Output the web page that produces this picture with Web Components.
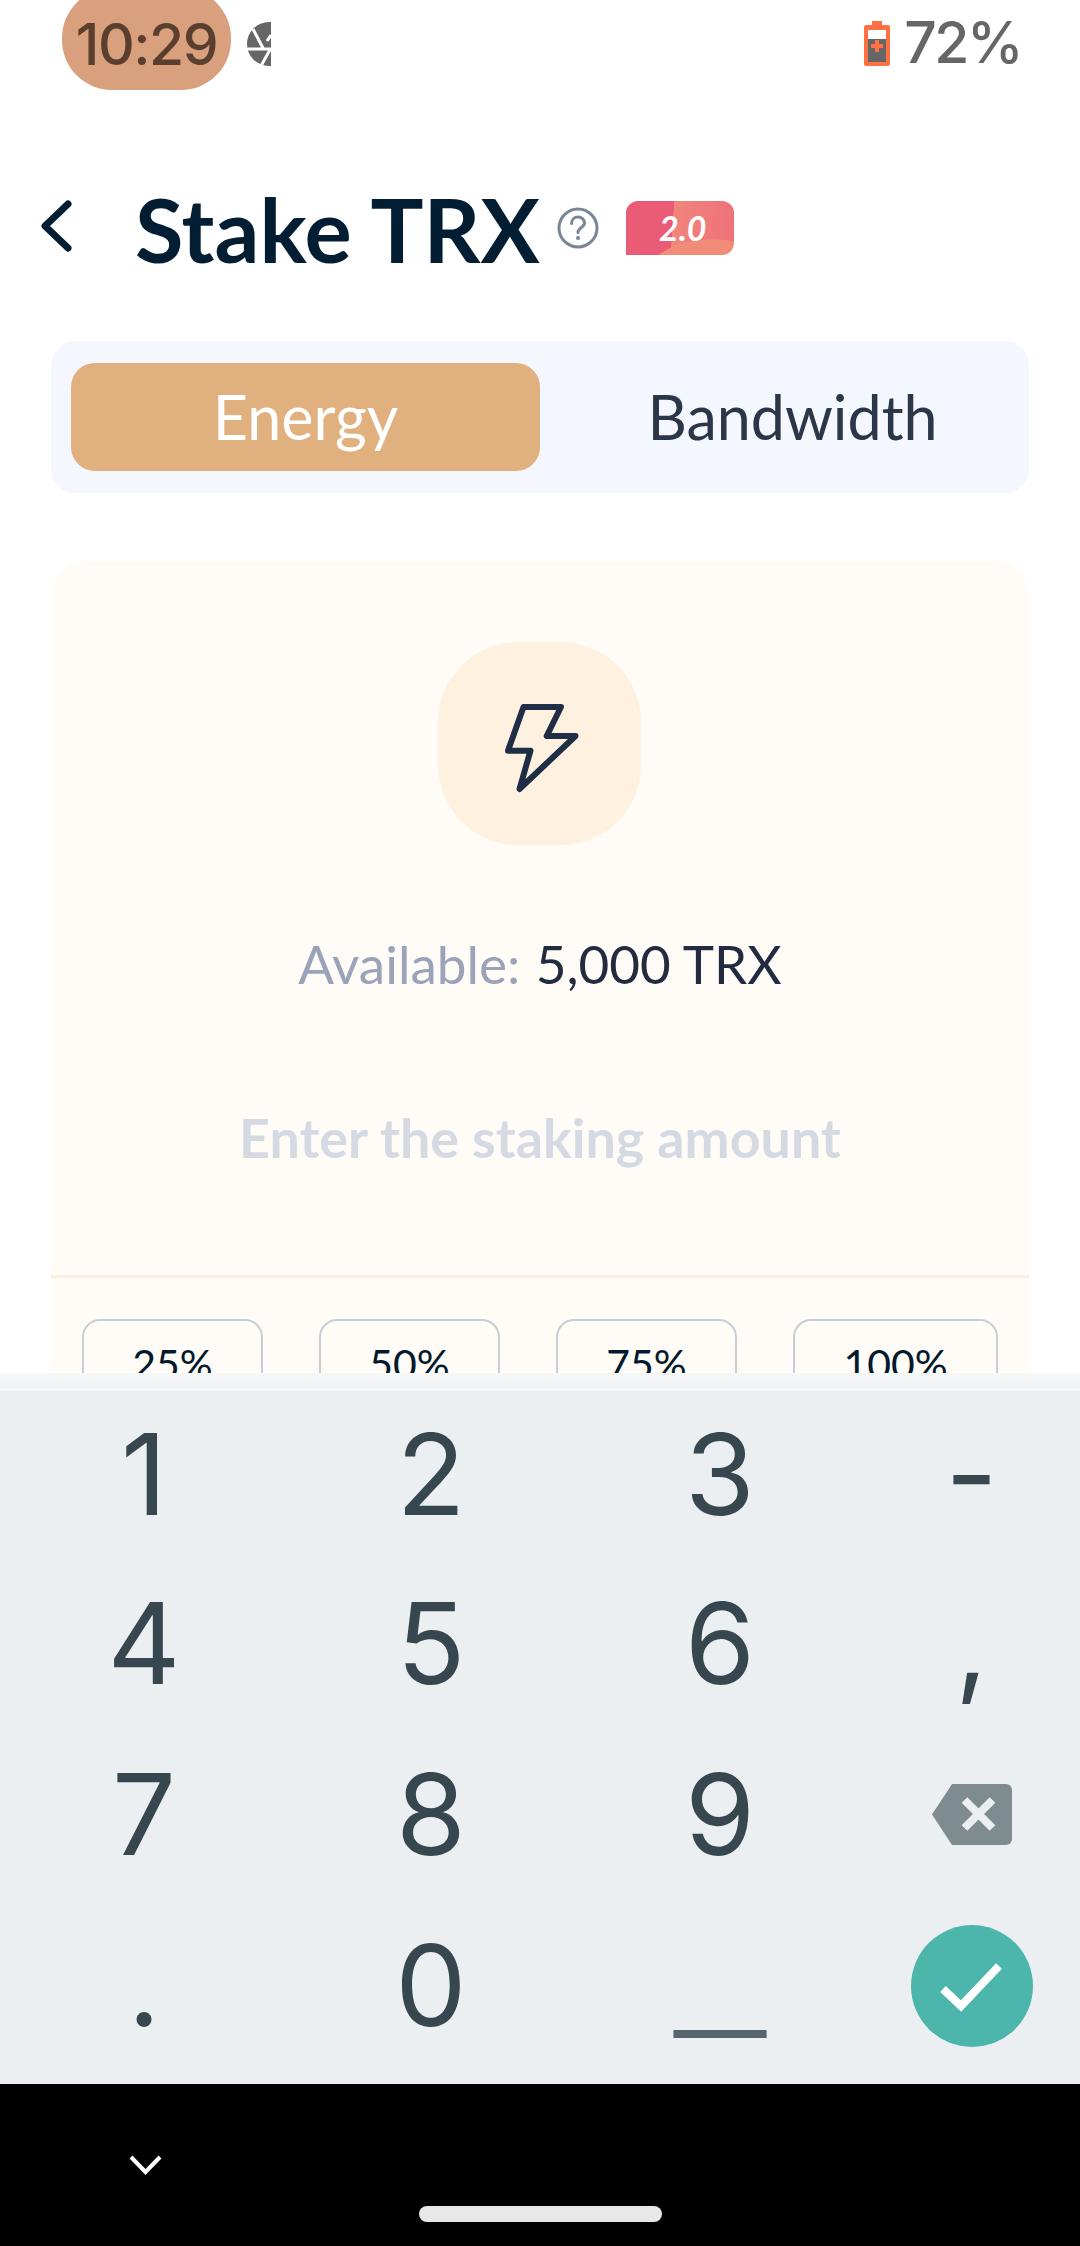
<!DOCTYPE html>
<html lang="en">
<head>
<meta charset="utf-8">
<title>Stake TRX</title>
<style>
  html, body { margin: 0; padding: 0; background: #fff; }
  body { width: 1080px; height: 2246px; overflow: hidden; display: flex; flex-direction: column; font-family: Lato, "Open Sans", sans-serif; }
  stake-view { flex: 1; min-height: 0; }
</style>
</head>
<body>
<status-bar time="10:29" level="72%"></status-bar>
<stake-view>
  <page-header title="Stake TRX"></page-header>
  <resource-tabs active="Energy" other="Bandwidth"></resource-tabs>
  <stake-card available="5,000 TRX" placeholder="Enter the staking amount">
    <percent-button>25%</percent-button>
    <percent-button>50%</percent-button>
    <percent-button>75%</percent-button>
    <percent-button wide>100%</percent-button>
  </stake-card>
</stake-view>
<number-keyboard></number-keyboard>
<nav-strip></nav-strip>

<script>
class StatusBar extends HTMLElement {
  connectedCallback() {
    const root = this.attachShadow({ mode: "open" });
    root.innerHTML = `
      <style>
        :host { display: flex; align-items: flex-start; height: 90px; flex: none; overflow: hidden; font-family: Inter, sans-serif; font-weight: 500; color: #666; }
        .pill { margin: -12px 0 0 62px; width: 169px; height: 102px; border-radius: 50px; background: #d9a07e; color: #5b3f2e; display: flex; align-items: center; justify-content: center; font-size: 57px; padding-top: 10px; box-sizing: border-box; letter-spacing: -1.500px; }
        .shutter { margin: 22px 0 0 16px; }
        .right { margin-left: auto; display: flex; align-items: flex-start; padding: 10px 59px 0 0; }
        .pct { font-size: 57px; line-height: 66px; margin-left: 14px; letter-spacing: -2.500px; }
        .batt { margin-top: 11px; }
      </style>
      <div class="pill">${this.getAttribute("time")}</div>
      <svg class="shutter" width="24" height="44" viewBox="0 0 24 44">
        <circle cx="22" cy="22" r="22" fill="#666"/>
        <path d="M6 7 L17 28 M-2 27 H24 M14 44 L24 26 M24 13 L20 19" stroke="#fff" stroke-width="3" fill="none"/>
      </svg>
      <div class="right">
        <svg class="batt" width="26" height="45" viewBox="0 0 26 45">
          <path d="M8 0h10v4h6a2 2 0 0 1 2 2v37a2 2 0 0 1-2 2H2a2 2 0 0 1-2-2V6a2 2 0 0 1 2-2h6z" fill="#ff7043"/>
          <rect x="4" y="9" width="18" height="9" fill="#fff"/>
          <rect x="4" y="18" width="18" height="23" fill="#666"/>
          <path d="M13 19v12M7 25h12" stroke="#ff7043" stroke-width="4"/>
        </svg>
        <span class="pct">${this.getAttribute("level")}</span>
      </div>`;
  }
}

class PageHeader extends HTMLElement {
  connectedCallback() {
    const root = this.attachShadow({ mode: "open" });
    root.innerHTML = `
      <style>
        :host { display: flex; align-items: center; height: 96px; margin-top: 88px; padding-left: 41px; color: #031d33; }
        .back { flex: none; }
        h1 { margin: 0 0 0 63px; font: 700 88.500px/96px Lato, sans-serif; white-space: nowrap; position: relative; top: 3px; }
        .help { margin-left: 17px; flex: none; margin-top: 4px; }
        .badge { margin: 4px 0 0 27px; width: 108px; height: 54px; flex: none; border-radius: 12px 12px 12px 0; color: #fff; font: italic 700 34px/54px Lato, sans-serif; text-align: center; padding-left: 6px; box-sizing: border-box;
          background:
            radial-gradient(ellipse 65px 36px at 86px 74px, #f08c78 98%, transparent 100%),
            linear-gradient(94deg, #ea5c75 43%, #f2847c 43.500%, #ee717a 100%); }
      </style>
      <svg class="back" width="31" height="52" viewBox="0 0 31 52">
        <path d="M27 4 L4 26 L27 48" fill="none" stroke="#031d33" stroke-width="7" stroke-linecap="round" stroke-linejoin="round"/>
      </svg>
      <h1>${this.getAttribute("title")}</h1>
      <svg class="help" width="42" height="42" viewBox="0 0 42 42">
        <circle cx="21" cy="21" r="19" fill="none" stroke="#7a8595" stroke-width="3"/>
        <path d="M14.500 16.500c0-4 3-6.500 6.500-6.500s6.500 2.500 6.500 6c0 4.500-6.500 4.500-6.500 9.500" fill="none" stroke="#7a8595" stroke-width="3" stroke-linecap="round"/>
        <circle cx="21" cy="31" r="2" fill="#7a8595"/>
      </svg>
      <div class="badge">2.0</div>`;
  }
}

class ResourceTabs extends HTMLElement {
  connectedCallback() {
    const root = this.attachShadow({ mode: "open" });
    root.innerHTML = `
      <style>
        :host { display: flex; margin: 67px 51px 0; height: 152px; padding: 22px 20px; box-sizing: border-box; background: #f4f7fd; border-radius: 24px; font: 400 61px/108px Lato, sans-serif; }
        div { text-align: center; }
        .on { width: 469px; background: #e0b07f; color: #fff; border-radius: 24px; }
        .off { flex: 1; color: #2b3648; padding-left: 36px; }
      </style>
      <div class="on">${this.getAttribute("active")}</div>
      <div class="off">${this.getAttribute("other")}</div>`;
  }
}

class StakeCard extends HTMLElement {
  connectedCallback() {
    const root = this.attachShadow({ mode: "open" });
    root.innerHTML = `
      <style>
        :host { display: block; margin: 68px 51px 0; padding-top: 81px; height: 900px; box-sizing: border-box; background: #fffcf8; border-radius: 36px; text-align: center; font-family: Lato, sans-serif; }
        .tile { width: 203px; height: 203px; margin: 0 0 0 387px; border-radius: 80px; background: #fef1df; }
        .tile svg { display: block; }
        .avail { margin-top: 89px; font-size: 53px; line-height: 60px; color: #9aa3b8; }
        .avail b { font-weight: 400; color: #232b41; margin-left: 2px; }
        .hint { margin-top: 113px; font-size: 53.800px; line-height: 60px; font-weight: 700; color: #d5d9e2; }
        .rule { margin-top: 108px; height: 3px; background: #f7efe3; }
        .row { display: flex; justify-content: space-between; padding: 41px 31px 0; }
      </style>
      <div class="tile">
        <svg width="202" height="202" viewBox="0 0 202 202">
          <path d="M85.500 65 H123 L108.700 94 H137.500 L81.500 147 L92.500 108.700 H70 Z" fill="none" stroke="#1f2d47" stroke-width="6" stroke-linejoin="round"/>
        </svg>
      </div>
      <div class="avail">Available: <b>${this.getAttribute("available")}</b></div>
      <div class="hint">${this.getAttribute("placeholder")}</div>
      <div class="rule"></div>
      <div class="row"><slot></slot></div>`;
  }
}

class PercentButton extends HTMLElement {
  connectedCallback() {
    const root = this.attachShadow({ mode: "open" });
    root.innerHTML = `
      <style>
        :host { display: block; width: 181px; height: 90px; box-sizing: border-box; border: 2px solid #c9ced6; border-radius: 18px; font: 400 41px/86px Lato, sans-serif; color: #03192d; text-align: center; }
        :host([wide]) { width: 205px; }
      </style>
      <slot></slot>`;
  }
}

class KeyCap extends HTMLElement {
  connectedCallback() {
    const root = this.attachShadow({ mode: "open" });
    root.innerHTML = `
      <style>
        :host { display: flex; align-items: center; justify-content: center; font: 400 113px/1 Inter, sans-serif; color: #37474f; }
      </style>
      <slot></slot>`;
  }
}

class NumberKeyboard extends HTMLElement {
  connectedCallback() {
    const root = this.attachShadow({ mode: "open" });
    const keys = [
      ["1"], ["2"], ["3"], ["-", "sym"],
      ["4"], ["5"], ["6"], [",", "sym low"],
      ["7"], ["8"], ["9"], ["", "del"],
      [".", "dot"], ["0"], ["_", "under"], ["", "enter"]
    ];
    const del = `<svg width="80" height="61" viewBox="0 0 80 61"><path d="M20 0 H74 a6 6 0 0 1 6 6 V55 a6 6 0 0 1-6 6 H20 L0 30.500 Z" fill="#7f8c8f"/><path d="M32.500 16 L60.500 44 M60.500 16 L32.500 44" stroke="#eceff1" stroke-width="8"/></svg>`;
    const enter = `<svg width="122" height="122" viewBox="0 0 122 122"><circle cx="61" cy="61" r="61" fill="#4db6ac"/><path d="M32 64 L50 81 L88 41" fill="none" stroke="#fff" stroke-width="8"/></svg>`;
    root.innerHTML = `
      <style>
        :host { display: block; flex: none; height: 711px; box-sizing: border-box; }
        .lip { height: 15px; background: linear-gradient(#f6f7f7, #f1f2f3); }
        .line { height: 3px; background: #f5f7f8; }
        .grid { height: 693px; box-sizing: border-box; background: #eceff1; display: grid; grid-template-columns: 288px 286px 292px 211px; grid-template-rows: 167px repeat(3, 171px); }
        key-cap.low { padding-bottom: 1px; box-sizing: border-box; }
        key-cap.dot { padding-top: 0; box-sizing: border-box; }
        key-cap.under { font-size: 130px; font-weight: 300; padding-bottom: 5px; box-sizing: border-box; transform: scaleX(1.6); color: #56666e; }
      </style>
      <div class="lip"></div>
      <div class="line"></div>
      <div class="grid">
        ${keys.map(([t, c]) => `<key-cap class="${c || ""}">${c === "del" ? del : c === "enter" ? enter : t}</key-cap>`).join("")}
      </div>`;
  }
}

class NavStrip extends HTMLElement {
  connectedCallback() {
    const root = this.attachShadow({ mode: "open" });
    root.innerHTML = `
      <style>
        :host { display: block; flex: none; height: 162px; background: #000; overflow: hidden; }
        .hide { display: block; margin: 71px 0 0 129px; }
        .home { width: 243px; height: 16px; margin: 31px auto 0; background: #e8e8e8; border-radius: 8px; }
      </style>
      <svg class="hide" width="33" height="20" viewBox="0 0 33 20"><path d="M2 2 L16.500 17 L31 2" fill="none" stroke="#fff" stroke-width="4"/></svg>
      <div class="home"></div>`;
  }
}

customElements.define("status-bar", StatusBar);
customElements.define("page-header", PageHeader);
customElements.define("resource-tabs", ResourceTabs);
customElements.define("stake-card", StakeCard);
customElements.define("percent-button", PercentButton);
customElements.define("key-cap", KeyCap);
customElements.define("number-keyboard", NumberKeyboard);
customElements.define("nav-strip", NavStrip);
customElements.define("stake-view", class extends HTMLElement {
  connectedCallback() {
    this.attachShadow({ mode: "open" }).innerHTML = `
      <style>:host { display: block; overflow: hidden; }</style>
      <slot></slot>`;
  }
});
</script>
</body>
</html>
